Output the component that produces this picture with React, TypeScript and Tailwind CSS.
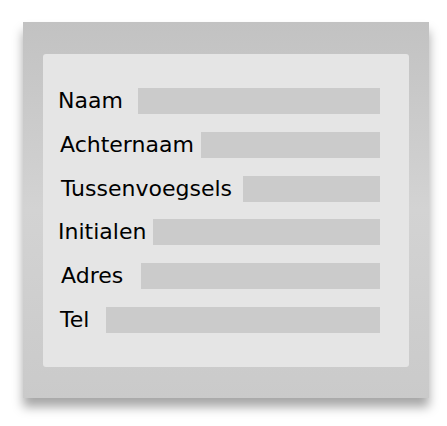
const rows = [
  { label: "Naam", lx: "ml-[15px]", bx: "ml-[15px]" },
  { label: "Achternaam", lx: "ml-[17px]", bx: "ml-[7px]" },
  { label: "Tussenvoegsels", lx: "ml-[18px]", bx: "ml-[11px]" },
  { label: "Initialen", lx: "ml-[15px]", bx: "ml-[7px]" },
  { label: "Adres", lx: "ml-[18px]", bx: "ml-[18px]" },
  { label: "Tel", lx: "ml-[17px]", bx: "ml-[17px]" },
];

const App: React.FC = () => {
  return (
    <div className="h-[426px] w-[447px] bg-white pl-[23px] pt-[22px]">
      <div className="h-[376px] w-[406px] bg-gradient-to-b from-[#c2c2c2] via-[#d3d3d3] to-[#cacaca] pl-[20px] pt-[32px] shadow-[0_9px_10px_rgba(0,0,0,0.35)]">
        <div className="flex h-[313px] w-[366px] flex-col gap-[17.8px] rounded-[3px] bg-[#e5e5e5] pt-[34px] font-['DejaVu_Sans',sans-serif] text-[22px] text-black">
          {rows.map((r) => (
            <div key={r.label} className="flex h-[26px] items-center pr-[29px]">
              <span className={`${r.lx} whitespace-nowrap leading-none`}>
                {r.label}
              </span>
              <div className={`${r.bx} h-[26px] flex-1 bg-[#cbcbcb]`} />
            </div>
          ))}
        </div>
      </div>
    </div>
  );
};

export default App;
